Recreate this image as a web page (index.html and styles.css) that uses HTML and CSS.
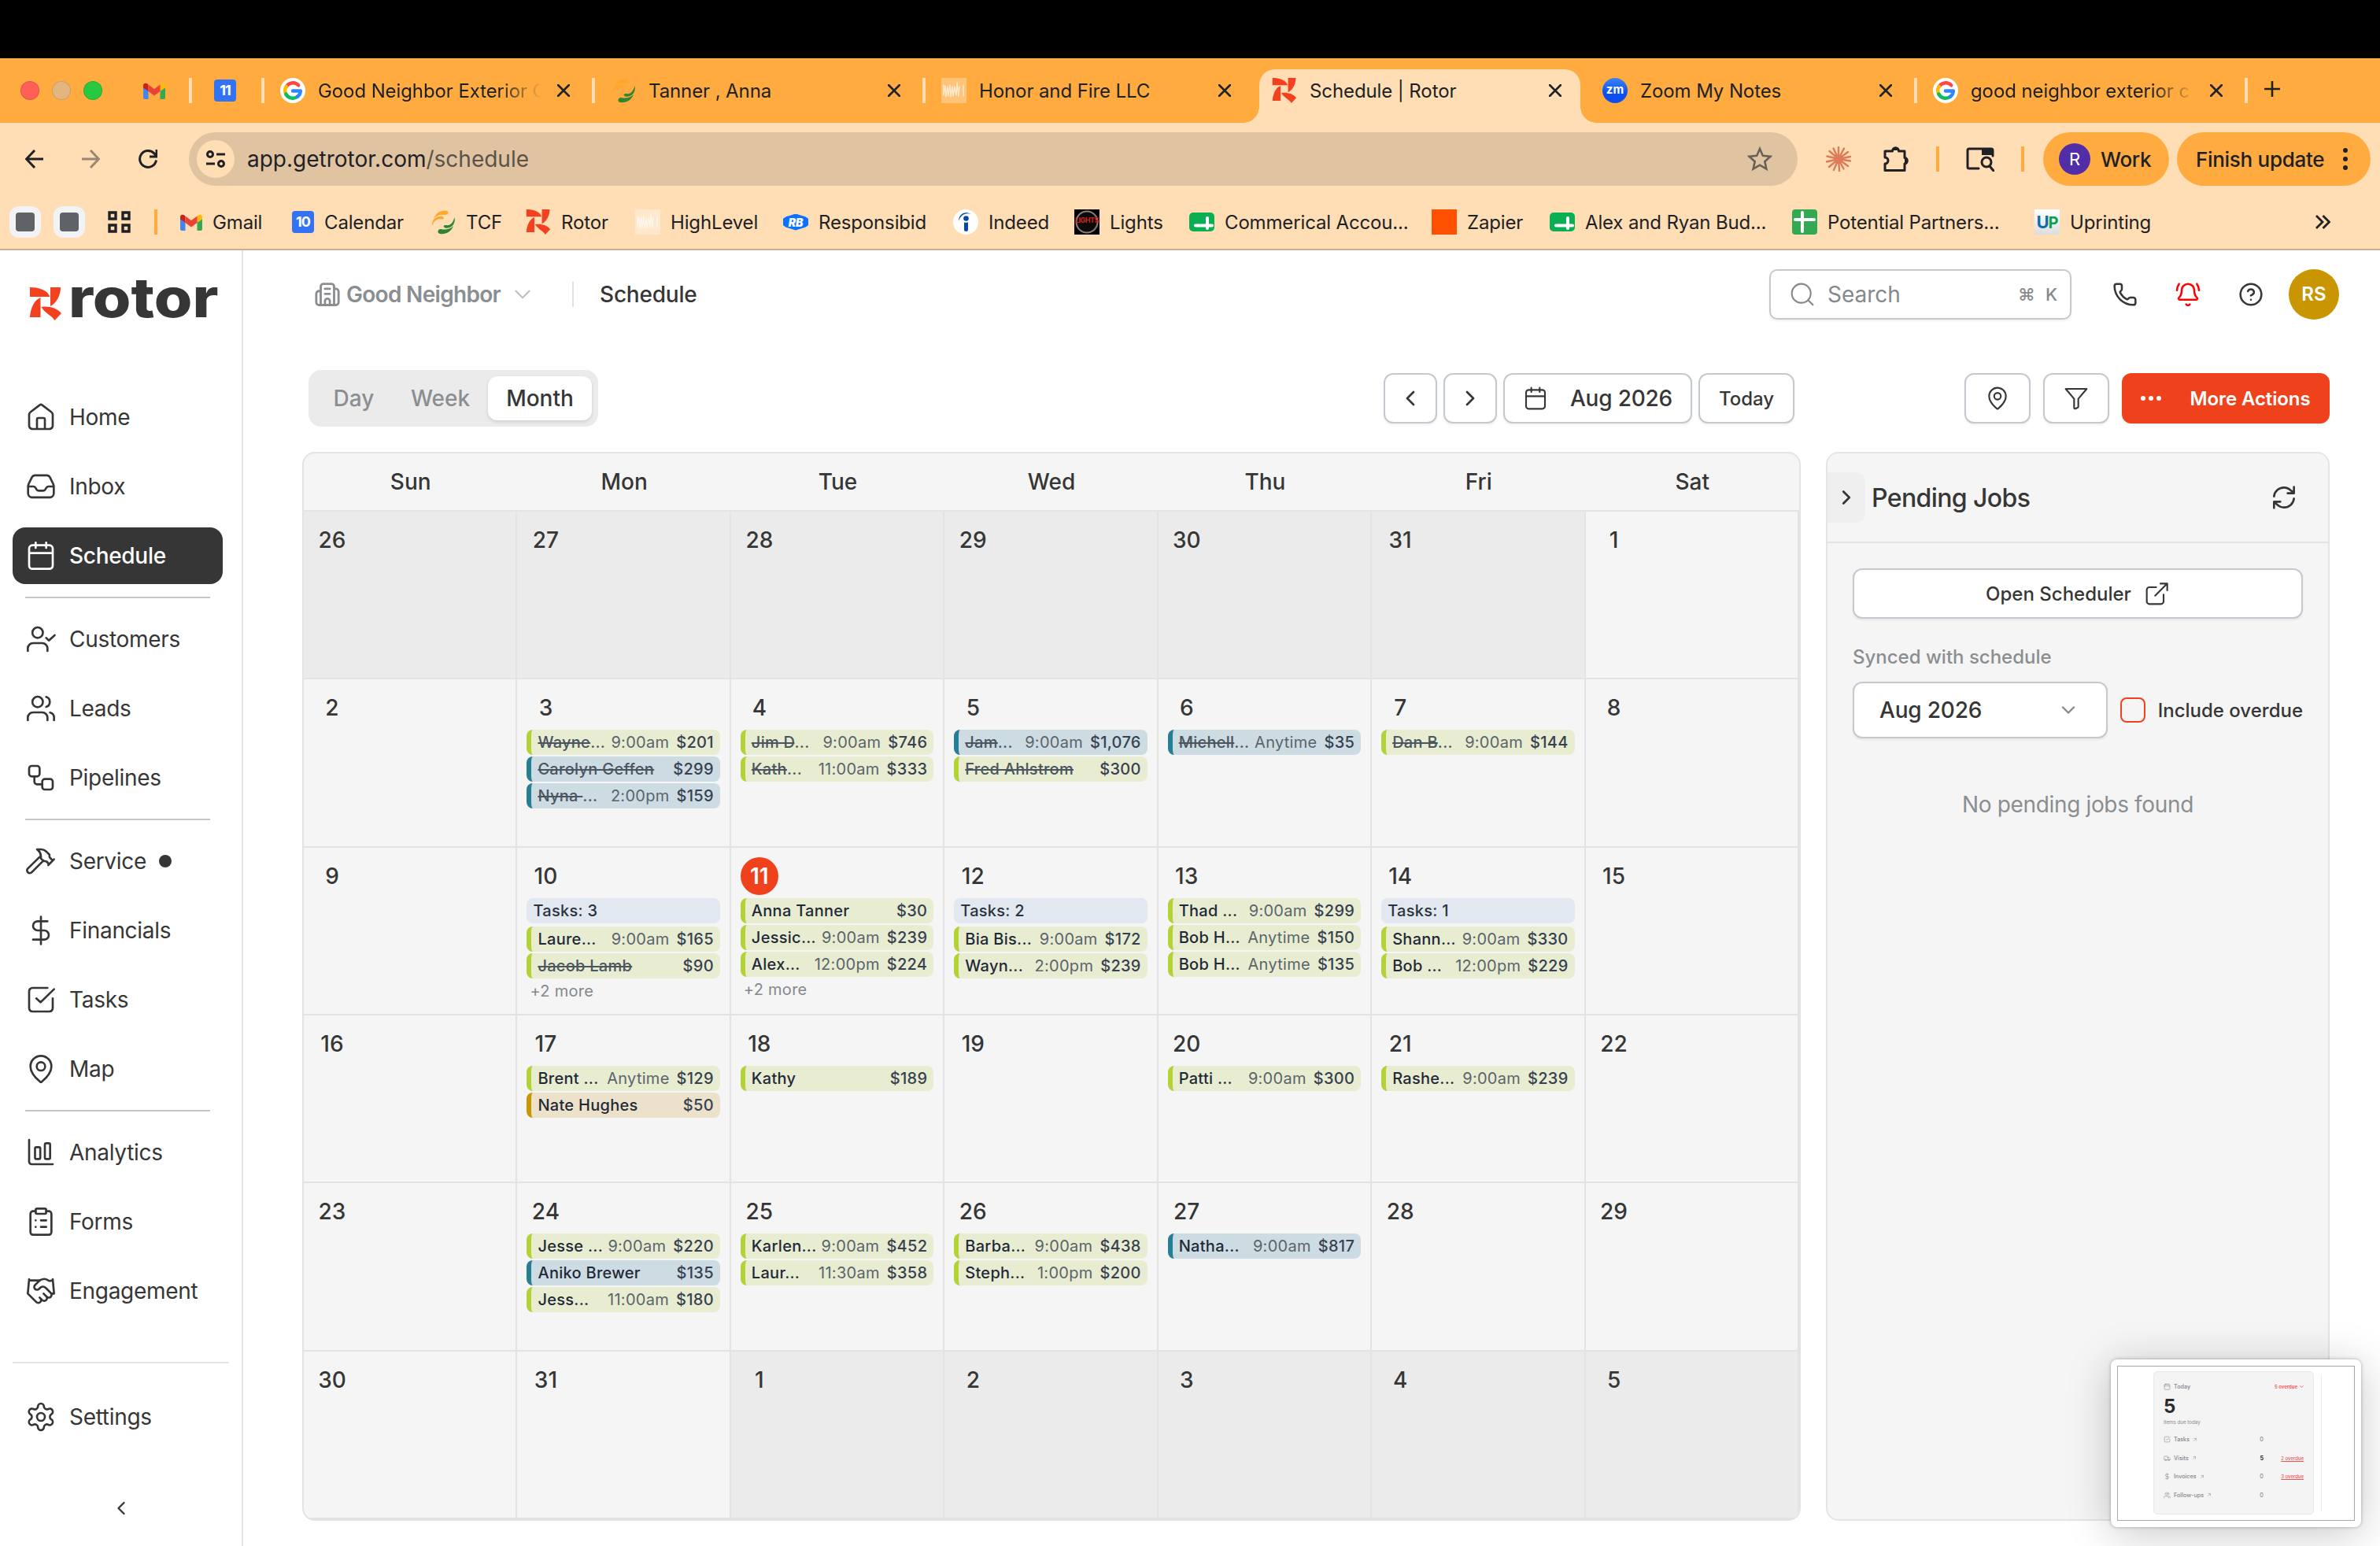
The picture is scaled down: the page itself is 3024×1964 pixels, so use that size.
FILE: index.html
```html
<!DOCTYPE html>
<html lang="en">
<head>
    <meta charset="UTF-8">
    <meta name="viewport" content="width=device-width, initial-scale=1.0">
    <title>Schedule | Rotor</title>
    <link rel="stylesheet" href="styles.css">
</head>
<body>
    <!-- Shared icons -->
    <svg class="sprite" xmlns="http://www.w3.org/2000/svg">
        <symbol id="i-rotor" viewBox="0 0 40 42"><path fill="#f3411f" d="M0 0C11 0 22 3 25.500 12H0zM26 0H39C39 10 34 20 26 24zM13.500 13V38H0C1 25 6 16 13.500 13zM14.500 25C24 23.500 34 26 40 33L31.500 42C27 35 19 33 14.500 25z"/></symbol>
        <symbol id="i-gmail" viewBox="0 0 28 21"><path fill="#4285f4" d="M0 5l6.500 4v12H2a2 2 0 0 1-2-2z"/><path fill="#34a853" d="M28 5l-6.500 4v12H26a2 2 0 0 0 2-2z"/><path fill="#fbbc04" d="M21.500 2.500C24 0 28 0 28 4v2.500L21.500 11z"/><path fill="#c5221f" d="M6.500 2.500C4 0 0 0 0 4v2.500L6.500 11z"/><path fill="#ea4335" d="M6.500 2.500L14 8l7.500-5.500V11L14 16.500 6.500 11z"/></symbol>
        <symbol id="i-google" viewBox="0 0 32 32"><circle cx="16" cy="16" r="16" fill="#fff"/><g fill="none" stroke-width="4.500"><path stroke="#ff4641" d="M7.500 11.500A9.800 9.800 0 0 1 23.200 9.300"/><path stroke="#fdbd00" d="M7.700 21.200A9.800 9.800 0 0 1 7.700 10.900"/><path stroke="#0ebc5f" d="M22.400 23.400A9.800 9.800 0 0 1 7.300 20.500"/><path stroke="#3186ff" d="M16 16.500H25.800A9.800 9.800 0 0 1 22 23.800"/></g></symbol>
        <symbol id="i-tcf" viewBox="0 0 32 32"><g fill="#ffa62b"><path d="M4 12C7 3 16 0 21 2c3 2 1 5-3 5C12 6 7 8 4 12z"/><path d="M2 21C1 13 8 8 15 9c3 1 2 4-1 3.500C8 11 4 15 2 21z"/></g><g fill="#2e8534"><path d="M30.500 10c2 10-6 15-12 13.500-3-1-2-4 1-3.500 6 1 9-3 11-10z"/><path d="M29 21c-3 8-10 11-17 10-4-1-3-6 1-6 6 1 11 1 16-4z"/></g></symbol>
        <symbol id="i-hl" viewBox="0 0 32 32"><path fill="#fff" opacity=".3" d="M0 0h32v32H0z"/><path stroke="#fff" stroke-width="1.400" opacity=".65" fill="none" d="M3 9v13l2-12 1 14 2-13 1 12 2-14 1 15 2-13 1 12 2-12 2 11 1-16 2 17 1-12M28 9v14"/></symbol>
        <symbol id="i-sheet" viewBox="0 0 32 32"><rect y="4" width="32" height="24" rx="5" fill="#0aaf54"/><path stroke="#fff" stroke-width="4" stroke-linecap="round" d="M8 20.500h21M23 11v13"/></symbol>
        <symbol id="i-x" viewBox="0 0 16 16"><path d="M1 1l14 14M15 1L1 15"/></symbol>
        <symbol id="i-home" viewBox="0 0 24 24"><path d="M9 21v-7.400c0-.6.400-1 1-1h4c.6 0 1 .4 1 1V21M11 2.800L4 8.100c-.7.500-1 1.200-1 2V18.500A2.500 2.500 0 0 0 5.500 21h13a2.500 2.500 0 0 0 2.500-2.500v-8.400c0-.8-.3-1.500-1-2l-7-5.300c-.6-.5-1.400-.5-2 0z"/></symbol>
        <symbol id="i-inbox" viewBox="0 0 24 24"><path d="M2.200 12h3.900c.8 0 1.400.4 1.800 1l.7 1.200c.4.600 1 1 1.800 1h3.200c.8 0 1.400-.4 1.800-1l.7-1.200c.4-.6 1-1 1.800-1h3.900M7.500 3.500h9c1 0 1.800.5 2.300 1.400l2.500 5c.3.700.5 1.400.5 2.100v5.300a3 3 0 0 1-3 3H5.200a3 3 0 0 1-3-3V12c0-.7.200-1.400.5-2.100l2.500-5c.5-.9 1.300-1.400 2.300-1.400z"/></symbol>
        <symbol id="i-cal" viewBox="0 0 24 24"><path d="M3 10h18M8 2v4M16 2v4M5.500 4h13A2.500 2.500 0 0 1 21 6.500v13a2.500 2.500 0 0 1-2.500 2.500h-13A2.500 2.500 0 0 1 3 19.500v-13A2.500 2.500 0 0 1 5.500 4z"/></symbol>
        <symbol id="i-customers" viewBox="0 0 24 24"><circle cx="9.500" cy="7" r="4"/><path d="M2 21v-2a4 4 0 0 1 4-4h7a4 4 0 0 1 4 4v2M16 11l2 2 4.500-4"/></symbol>
        <symbol id="i-users" viewBox="0 0 24 24"><circle cx="9.500" cy="7" r="4"/><path d="M2 21v-2a4 4 0 0 1 4-4h7a4 4 0 0 1 4 4v2M22 21v-2a4 4 0 0 0-3-3.900M16 3.200a4 4 0 0 1 0 7.600"/></symbol>
        <symbol id="i-pipe" viewBox="0 0 24 24"><rect x="3" y="3" width="8" height="8" rx="2"/><path d="M7 11v4a2 2 0 0 0 2 2h4"/><rect x="13" y="13" width="8" height="8" rx="2"/></symbol>
        <symbol id="i-hammer" viewBox="0 0 24 24"><path d="M14 11.500l-9 9a2 2 0 0 1-3-2.900l9.200-9M17.600 15L22 10.600M21 11.500l-1.900-1.900a2 2 0 0 1-.6-1.400V7L16.200 4.800A5.600 5.600 0 0 0 12.400 3H9l.9.800A6.200 6.200 0 0 1 12 8.400v1.600l2 2h1.200a2 2 0 0 1 1.400.6l1.700 1.800"/></symbol>
        <symbol id="i-dollar" viewBox="0 0 24 24"><path d="M12 1.500v21M17 5H9.500a3.500 3.500 0 0 0 0 7h5a3.500 3.500 0 0 1 0 7H6"/></symbol>
        <symbol id="i-task" viewBox="0 0 24 24"><path d="M21 11v7.500a2.500 2.500 0 0 1-2.500 2.500h-13A2.500 2.500 0 0 1 3 18.500v-13A2.500 2.500 0 0 1 5.500 3H17M8.500 11l3.200 3L22 4"/></symbol>
        <symbol id="i-pin" viewBox="0 0 24 24"><path d="M20 10c0 5-5.500 10.200-7.400 11.800a1 1 0 0 1-1.200 0C9.500 20.200 4 15 4 10a8 8 0 0 1 16 0"/><circle cx="12" cy="10" r="3.200"/></symbol>
        <symbol id="i-chart" viewBox="0 0 24 24"><path d="M3 2.500V19a2 2 0 0 0 2 2h16"/><rect x="7.500" y="8" width="4" height="9" rx="1"/><rect x="15" y="5" width="4" height="12" rx="1"/></symbol>
        <symbol id="i-form" viewBox="0 0 24 24"><rect x="8" y="2" width="8" height="4" rx="1"/><path d="M16 4h2a2 2 0 0 1 2 2v14a2 2 0 0 1-2 2H6a2 2 0 0 1-2-2V6a2 2 0 0 1 2-2h2M12 11h4M12 16h4M8 11h.01M8 16h.01"/></symbol>
        <symbol id="i-shake" viewBox="0 0 24 24"><path d="M11 17l2 2a1 1 0 1 0 3-3M14 14l2.500 2.500a1 1 0 1 0 3-3l-3.900-3.900a3 3 0 0 0-4.200 0l-.9.900a1 1 0 1 1-3-3l2.800-2.800a5.800 5.800 0 0 1 7.100-.9l.5.300a2 2 0 0 0 1.400.2L21 4M21 3l1 11h-2M3 3L2 14l6.500 6.500a1 1 0 1 0 3-3M3 4h8"/></symbol>
        <symbol id="i-gear" viewBox="0 0 24 24"><circle cx="12" cy="12" r="3"/><path d="M9.700 4.100a2.300 2.300 0 0 1 4.600 0 2.300 2.300 0 0 0 3.300 1.900 2.300 2.300 0 0 1 2.300 4 2.300 2.300 0 0 0 0 3.900 2.300 2.300 0 0 1-2.300 4 2.300 2.300 0 0 0-3.300 1.900 2.300 2.300 0 0 1-4.600 0 2.300 2.300 0 0 0-3.400-1.900 2.300 2.300 0 0 1-2.300-4 2.300 2.300 0 0 0 0-3.900 2.300 2.300 0 0 1 2.300-4 2.300 2.300 0 0 0 3.400-1.900"/></symbol>
        <symbol id="i-left" viewBox="0 0 24 24"><path d="M15 18l-6-6 6-6"/></symbol>
        <symbol id="i-right" viewBox="0 0 24 24"><path d="M9 18l6-6-6-6"/></symbol>
        <symbol id="i-down" viewBox="0 0 24 24"><path d="M6 9l6 6 6-6"/></symbol>
        <symbol id="i-building" viewBox="0 0 24 24"><path d="M6 21.500V5a2.500 2.500 0 0 1 2.500-2.500h7A2.500 2.500 0 0 1 18 5v16.500M6 9H4.500A2.500 2.500 0 0 0 2 11.500v7.500a2.500 2.500 0 0 0 2.500 2.500h15A2.500 2.500 0 0 0 22 19V9.500A2.500 2.500 0 0 0 19.500 7H18M9.800 7h4.400M9.800 11.500h4.400M9.800 21.500V18a2.200 2.200 0 0 1 4.400 0v3.500"/></symbol>
        <symbol id="i-search" viewBox="0 0 24 24"><circle cx="11" cy="11" r="9"/><path d="M22 22l-4.300-4.300"/></symbol>
        <symbol id="i-phone" viewBox="0 0 24 24"><path d="M13.800 16.600a1 1 0 0 0 1.200-.3l.4-.5a2 2 0 0 1 1.600-.8h3a2 2 0 0 1 2 2v3a2 2 0 0 1-2 2A18 18 0 0 1 2 4a2 2 0 0 1 2-2h3a2 2 0 0 1 2 2v3a2 2 0 0 1-.8 1.600l-.5.400a1 1 0 0 0-.3 1.200 14 14 0 0 0 6.400 6.400"/></symbol>
        <symbol id="i-bell" viewBox="0 0 24 24"><path d="M10.300 21.500a2 2 0 0 0 3.400 0M22.500 8c0-2.300-.8-4.300-2-6M1.500 8c0-2.300.8-4.300 2-6M3.300 15.300A1 1 0 0 0 4 17h16a1 1 0 0 0 .7-1.700C19.400 14 18 12.500 18 8A6 6 0 0 0 6 8c0 4.500-1.400 6-2.700 7.300"/></symbol>
        <symbol id="i-help" viewBox="0 0 24 24"><circle cx="12" cy="12" r="10"/><path d="M9.100 9a3 3 0 0 1 5.800 1c0 2-3 3-3 3M12 17h.01"/></symbol>
        <symbol id="i-filter" viewBox="0 0 24 24"><path d="M2 3h20l-8 9.500V20a1 1 0 0 1-.5.800l-2 1a1 1 0 0 1-1.500-.8v-8.500z"/></symbol>
        <symbol id="i-refresh" viewBox="0 0 24 24"><path d="M2.500 11A9.500 9.500 0 0 1 12 2.500c3 0 5 1.200 6.800 3L21.500 8M21.500 2v6h-6M21.500 13A9.500 9.500 0 0 1 12 21.500c-3 0-5-1.200-6.800-3L2.500 16M2.500 22v-6h6"/></symbol>
        <symbol id="i-open" viewBox="0 0 24 24"><path d="M15 2.500h6.500V9M10 14L21.500 2.500M18 13v6.500a2.500 2.500 0 0 1-2.500 2.500h-11A2.500 2.500 0 0 1 2 19.500v-11A2.500 2.500 0 0 1 4.500 6H11"/></symbol>
        <symbol id="i-truck" viewBox="0 0 24 24"><path d="M5 18H3.500A1.500 1.500 0 0 1 2 16.500v-10A1.500 1.500 0 0 1 3.500 5h9A1.500 1.500 0 0 1 14 6.500V18H9M14 9h4.500l3.500 4v5h-3"/><circle cx="7" cy="18" r="2"/><circle cx="17" cy="18" r="2"/></symbol>
        <symbol id="i-ne" viewBox="0 0 24 24"><path d="M6 18L18 6M8 6h10v10"/></symbol>
    </svg>

    <div class="menubar"></div>

    <!-- Browser tabs -->
    <div class="tabstrip">
        <div class="lights"><i class="red"></i><i class="tan"></i><i class="green"></i></div>
        <div class="pinned"><svg class="gmail"><use href="#i-gmail"/></svg></div>
        <div class="pinned sep"><span class="gcal">11</span></div>
        <div class="tab sep"><svg class="fav"><use href="#i-google"/></svg><span class="tab-title fade">Good Neighbor Exterior C</span><svg class="close"><use href="#i-x"/></svg></div>
        <div class="tab sep"><svg class="fav"><use href="#i-tcf"/></svg><span class="tab-title">Tanner , Anna</span><svg class="close"><use href="#i-x"/></svg></div>
        <div class="tab sep"><svg class="fav"><use href="#i-hl"/></svg><span class="tab-title">Honor and Fire LLC</span><svg class="close"><use href="#i-x"/></svg></div>
        <div class="tab active"><svg class="fav"><use href="#i-rotor"/></svg><span class="tab-title">Schedule | Rotor</span><svg class="close"><use href="#i-x"/></svg></div>
        <div class="tab"><span class="fav zoom-logo">zm</span><span class="tab-title">Zoom My Notes</span><svg class="close"><use href="#i-x"/></svg></div>
        <div class="tab sep"><svg class="fav"><use href="#i-google"/></svg><span class="tab-title fade">good neighbor exterior c</span><svg class="close"><use href="#i-x"/></svg></div>
        <div class="new-tab sep"><svg viewBox="0 0 20 20"><path d="M10 0v20M0 10h20"/></svg></div>
    </div>

    <!-- Address bar and bookmarks -->
    <div class="chrome">
        <div class="toolbar">
            <svg class="nav-btn" viewBox="0 0 24 24"><path d="M23 12H2M12 1L1.500 12 12 23"/></svg>
            <svg class="nav-btn dim" viewBox="0 0 24 24"><path d="M1 12h21M12 1l10.500 11L12 23"/></svg>
            <svg class="nav-btn" viewBox="0 0 24 24"><path d="M22.500 13.500A10.500 10.500 0 1 1 20 5l3 3.500M23 0v9h-9"/></svg>
            <div class="address">
                <span class="site-info"><svg viewBox="0 0 26 26"><circle cx="6" cy="7" r="3.500"/><path d="M14 7h11M1 19h11"/><circle cx="20" cy="19" r="3.500"/></svg></span>
                <span class="url">app.getrotor.com<span>/schedule</span></span>
                <svg class="star" viewBox="0 0 32 32"><path d="M16 3l3.900 8.900 9.600.9-7.200 6.400 2.100 9.500L16 23.700l-8.400 5 2.100-9.500-7.200-6.400 9.600-.9z"/></svg>
            </div>
            <svg class="claude" viewBox="0 0 32 32"><path d="M16 16V1M16 16L23 2.500M16 16L28 7M16 16L31 13M16 16L31 18.500M16 16L28 25M16 16L22.500 28.500M16 16L17 31M16 16L10 30M16 16L4 26M16 16L1 19.500M16 16L1.500 12.500M16 16L4.500 6M16 16L9.500 2.500"/></svg>
            <svg class="puzzle" viewBox="0 0 34 34"><path d="M3 7h9.500a4 4 0 0 1 8 0H28v8.500a3.800 3.800 0 0 1 0 7.500v8.500H3V23a4 4 0 0 0 0-8z"/><path class="solid" d="M12 6a4.500 4.500 0 0 1 9 0zM28 14.500a4.500 4.500 0 0 1 0 9z"/></svg>
            <i class="bar"></i>
            <svg class="tab-search" viewBox="0 0 36 32"><path d="M16 28H4a2 2 0 0 1-2-2V5a2 2 0 0 1 2-2h28a2 2 0 0 1 2 2v7"/><circle cx="26" cy="20" r="6"/><path d="M30 25l5 6"/><path class="solid" d="M20 3h14v8H20z"/></svg>
            <i class="bar"></i>
            <div class="pill profile"><span>R</span>Work</div>
            <div class="pill update">Finish update<i></i></div>
        </div>
        <div class="bookmarks">
            <span class="bm-group"></span>
            <span class="bm-group"></span>
            <svg class="apps" viewBox="0 0 30 28"><path d="M2 2h8v8H2zM19 2h8v8h-8zM2 18h8v8H2zM19 18h8v8h-8z"/></svg>
            <i class="bar"></i>
            <div class="bm"><svg class="gmail"><use href="#i-gmail"/></svg>Gmail</div>
            <div class="bm"><span class="gcal">10</span>Calendar</div>
            <div class="bm"><svg class="fav"><use href="#i-tcf"/></svg>TCF</div>
            <div class="bm"><svg class="fav"><use href="#i-rotor"/></svg>Rotor</div>
            <div class="bm"><svg class="fav"><use href="#i-hl"/></svg>HighLevel</div>
            <div class="bm"><span class="rb">RB</span>Responsibid</div>
            <div class="bm"><svg class="fav" viewBox="0 0 32 32"><circle cx="16" cy="16" r="16" fill="#fff"/><g fill="#0b45a8"><circle cx="16.500" cy="11.500" r="3.300"/><path d="M14 16.500c2 .6 3.500.4 5-.2V26c0 2.500-5 2.500-5 0zM7 15C7 6 15 1.500 22.500 6 15 3.500 9 8 7 15z"/></g></svg>Indeed</div>
            <div class="bm"><span class="fav lights-logo">LIGHTS</span>Lights</div>
            <div class="bm"><svg class="fav"><use href="#i-sheet"/></svg>Commerical Accou...</div>
            <div class="bm"><span class="fav zapier"></span>Zapier</div>
            <div class="bm"><svg class="fav"><use href="#i-sheet"/></svg>Alex and Ryan Bud...</div>
            <div class="bm"><svg class="fav" viewBox="0 0 32 32"><rect width="32" height="32" rx="4" fill="#34a853"/><path stroke="#fff" stroke-width="4" d="M4 13h24M13 4v24"/></svg>Potential Partners...</div>
            <div class="bm"><span class="fav up"><b>U</b><b>P</b></span>Uprinting</div>
            <svg class="more" viewBox="0 0 20 18"><path d="M2 1l8 8-8 8M10.500 1l8 8-8 8"/></svg>
        </div>
    </div>

    <div class="app">
        <aside class="sidebar">
            <div class="logo"><svg><use href="#i-rotor"/></svg><span>rotor</span></div>
            <nav>
                <a class="nav-item"><svg><use href="#i-home"/></svg>Home</a>
                <a class="nav-item"><svg><use href="#i-inbox"/></svg>Inbox</a>
                <a class="nav-item active"><svg><use href="#i-cal"/></svg>Schedule</a>
                <hr>
                <a class="nav-item"><svg><use href="#i-customers"/></svg>Customers</a>
                <a class="nav-item"><svg><use href="#i-users"/></svg>Leads</a>
                <a class="nav-item"><svg><use href="#i-pipe"/></svg>Pipelines</a>
                <hr>
                <a class="nav-item"><svg><use href="#i-hammer"/></svg>Service<i class="dot"></i></a>
                <a class="nav-item"><svg><use href="#i-dollar"/></svg>Financials</a>
                <a class="nav-item"><svg><use href="#i-task"/></svg>Tasks</a>
                <a class="nav-item"><svg><use href="#i-pin"/></svg>Map</a>
                <hr>
                <a class="nav-item"><svg><use href="#i-chart"/></svg>Analytics</a>
                <a class="nav-item"><svg><use href="#i-form"/></svg>Forms</a>
                <a class="nav-item"><svg><use href="#i-shake"/></svg>Engagement</a>
            </nav>
            <div class="sidebar-foot">
                <a class="nav-item"><svg><use href="#i-gear"/></svg>Settings</a>
                <svg class="collapse"><use href="#i-left"/></svg>
            </div>
        </aside>

        <main>
            <header class="topbar">
                <svg class="building"><use href="#i-building"/></svg>
                <span class="org">Good Neighbor</span>
                <svg class="org-arrow"><use href="#i-down"/></svg>
                <i class="divider"></i>
                <h1>Schedule</h1>
                <div class="search"><svg><use href="#i-search"/></svg><span>Search</span><kbd>⌘</kbd><kbd>K</kbd></div>
                <svg class="top-icon"><use href="#i-phone"/></svg>
                <svg class="top-icon alert"><use href="#i-bell"/></svg>
                <svg class="top-icon"><use href="#i-help"/></svg>
                <span class="avatar">RS</span>
            </header>

            <div class="controls">
                <div class="views"><span>Day</span><span>Week</span><span class="on">Month</span></div>
                <div class="date-nav">
                    <button class="btn arrow"><svg><use href="#i-left"/></svg></button>
                    <button class="btn arrow"><svg><use href="#i-right"/></svg></button>
                    <button class="btn date"><svg><use href="#i-cal"/></svg>Aug 2026</button>
                    <button class="btn today">Today</button>
                </div>
                <div class="actions">
                    <button class="btn square"><svg><use href="#i-pin"/></svg></button>
                    <button class="btn square"><svg><use href="#i-filter"/></svg></button>
                    <button class="btn primary"><span class="dots"><i></i><i></i><i></i></span>More Actions</button>
                </div>
            </div>

            <div class="content">
                <section class="calendar">
                    <div class="weekdays"><span>Sun</span><span>Mon</span><span>Tue</span><span>Wed</span><span>Thu</span><span>Fri</span><span>Sat</span></div>
                    <div class="days" id="days"></div>
                </section>

                <aside class="pending">
                    <div class="pending-head">
                        <span class="toggle"><svg><use href="#i-right"/></svg></span>
                        <h2>Pending Jobs</h2>
                        <svg class="refresh"><use href="#i-refresh"/></svg>
                    </div>
                    <div class="pending-body">
                        <button class="btn open">Open Scheduler<svg><use href="#i-open"/></svg></button>
                        <p class="synced">Synced with schedule</p>
                        <div class="filter-row">
                            <div class="select">Aug 2026<svg><use href="#i-down"/></svg></div>
                            <i class="checkbox"></i>
                            <span class="overdue-label">Include overdue</span>
                        </div>
                        <p class="empty">No pending jobs found</p>
                    </div>
                </aside>
            </div>
        </main>
    </div>

    <!-- Floating preview -->
    <div class="preview">
        <div class="preview-frame">
            <div class="preview-card">
                <div class="p-head"><svg><use href="#i-cal"/></svg>Today<b>5 overdue</b><svg class="p-down"><use href="#i-down"/></svg></div>
                <div class="p-count">5</div>
                <div class="p-sub">items due today</div>
                <div class="p-row"><svg><use href="#i-task"/></svg>Tasks<svg class="ne"><use href="#i-ne"/></svg><em>0</em><u></u></div>
                <div class="p-row"><svg><use href="#i-truck"/></svg>Visits<svg class="ne"><use href="#i-ne"/></svg><em class="strong">5</em><u>2 overdue</u></div>
                <div class="p-row"><svg><use href="#i-dollar"/></svg>Invoices<svg class="ne"><use href="#i-ne"/></svg><em>0</em><u>3 overdue</u></div>
                <div class="p-row"><svg><use href="#i-users"/></svg>Follow-ups<svg class="ne"><use href="#i-ne"/></svg><em>0</em><u></u></div>
            </div>
            <i class="p-line"></i>
        </div>
    </div>

    <script>
        // [color, name, ellipsis, time, price, done]
        const events = {
            3: [['green', 'Wayne', '...', '9:00am', '$201', 1], ['blue', 'Carolyn Geffen', '', '', '$299', 1], ['blue', 'Nyna ', '...', '2:00pm', '$159', 1]],
            4: [['green', 'Jim D', '...', '9:00am', '$746', 1], ['green', 'Kath', '...', '11:00am', '$333', 1]],
            5: [['blue', 'Jam', '...', '9:00am', '$1,076', 1], ['green', 'Fred Ahlstrom', '', '', '$300', 1]],
            6: [['blue', 'Michell', '...', 'Anytime', '$35', 1]],
            7: [['green', 'Dan B', '...', '9:00am', '$144', 1]],
            10: [['green', 'Laure', '...', '9:00am', '$165'], ['green', 'Jacob Lamb', '', '', '$90', 1]],
            11: [['green', 'Anna Tanner', '', '', '$30'], ['green', 'Jessic', '...', '9:00am', '$239'], ['green', 'Alex', '...', '12:00pm', '$224']],
            12: [['green', 'Bia Bis', '...', '9:00am', '$172'], ['green', 'Wayn', '...', '2:00pm', '$239']],
            13: [['green', 'Thad ', '...', '9:00am', '$299'], ['green', 'Bob H', '...', 'Anytime', '$150'], ['green', 'Bob H', '...', 'Anytime', '$135']],
            14: [['green', 'Shann', '...', '9:00am', '$330'], ['green', 'Bob ', '...', '12:00pm', '$229']],
            17: [['green', 'Brent ', '...', 'Anytime', '$129'], ['gold', 'Nate Hughes', '', '', '$50']],
            18: [['green', 'Kathy', '', '', '$189']],
            20: [['green', 'Patti ', '...', '9:00am', '$300']],
            21: [['green', 'Rashe', '...', '9:00am', '$239']],
            24: [['green', 'Jesse ', '...', '9:00am', '$220'], ['blue', 'Aniko Brewer', '', '', '$135'], ['green', 'Jess', '...', '11:00am', '$180']],
            25: [['green', 'Karlen', '...', '9:00am', '$452'], ['green', 'Laur', '...', '11:30am', '$358']],
            26: [['green', 'Barba', '...', '9:00am', '$438'], ['green', 'Steph', '...', '1:00pm', '$200']],
            27: [['blue', 'Natha', '...', '9:00am', '$817']]
        };
        const tasks = { 10: 3, 12: 2, 14: 1 };
        const more = { 10: 2, 11: 2 };
        const today = 11;

        const grid = document.getElementById('days');
        const first = new Date(2026, 6, 26);
        for (let i = 0; i < 42; i++) {
            const date = new Date(first.getFullYear(), first.getMonth(), first.getDate() + i);
            const d = date.getDate();
            const inMonth = date.getMonth() === 7;
            let html = `<span class="num${inMonth && d === today ? ' current' : ''}">${d}</span>`;
            if (inMonth) {
                if (tasks[d]) html += `<div class="event tasks">Tasks: ${tasks[d]}</div>`;
                (events[d] || []).forEach(([color, name, dots, time, price, done]) => {
                    html += `<div class="event ${color}"><span class="name${done ? ' done' : ''}"><span>${name}</span>${dots}</span><span class="time">${time}</span><span class="price">${price}</span></div>`;
                });
                if (more[d]) html += `<div class="more-link">+${more[d]} more</div>`;
            }
            const cell = document.createElement('div');
            cell.className = 'day' + (inMonth ? '' : ' other');
            cell.innerHTML = html;
            grid.appendChild(cell);
        }
    </script>
</body>
</html>
```
FILE: styles.css
```css
* {
    margin: 0;
    padding: 0;
    box-sizing: border-box;
}

body {
    width: 3024px;
    height: 1964px;
    overflow: hidden;
    display: flex;
    flex-direction: column;
    background: #fff;
    font-family: Inter, "Liberation Sans", sans-serif;
    color: #363636;
}

svg {
    fill: none;
    stroke: currentColor;
    stroke-width: 1.6;
    stroke-linecap: round;
    stroke-linejoin: round;
    flex: none;
}

.sprite {
    position: absolute;
    width: 0;
    height: 0;
}

.menubar {
    height: 74px;
    flex: none;
    background: #000;
}

/* Tabs */
.tabstrip {
    height: 82px;
    flex: none;
    display: flex;
    background: #ffab40;
    color: #202124;
    font-size: 24px;
}

.lights {
    width: 150px;
    padding-left: 26px;
    display: flex;
    align-items: center;
    gap: 16px;
}

.lights i {
    width: 24px;
    height: 24px;
    border-radius: 50%;
    border: 1px solid rgba(0, 0, 0, 0.12);
}

.red { background: #ff5f57; }
.tan { background: #e3b680; }
.green { background: #28c840; }

.pinned {
    width: 92px;
    display: flex;
    align-items: center;
    justify-content: center;
}

.fav {
    width: 32px;
    height: 32px;
    flex: none;
    stroke: none;
}

.gmail {
    width: 28px;
    height: 21px;
    stroke: none;
}

.gcal {
    width: 28px;
    height: 28px;
    border-radius: 4px;
    background: #3273f6;
    color: #fff;
    font-size: 18px;
    font-weight: 700;
    letter-spacing: -1px;
    line-height: 28px;
    text-align: center;
}

.sep {
    background: linear-gradient(#ffdeb5, #ffdeb5) no-repeat left 50% / 4px 32px;
}

.pinned.sep {
    margin-left: -2px;
    width: 92px;
}

.tab {
    width: 420px;
    padding: 0 24px 0 24px;
    display: flex;
    align-items: center;
}

.tab-title {
    width: 284px;
    margin-left: 16px;
    white-space: nowrap;
    overflow: hidden;
    letter-spacing: -0.1px;
}

.tab-title.fade {
    -webkit-mask-image: linear-gradient(90deg, #000 230px, transparent 284px);
    mask-image: linear-gradient(90deg, #000 230px, transparent 284px);
}

.close {
    width: 16px;
    height: 16px;
    margin-left: 20px;
    stroke-width: 2.6;
}

.tab.active {
    position: relative;
    width: 408px;
    height: 68px;
    margin: 14px 4px 0 8px;
    padding: 0 0 14px 16px;
    background: #ffdeb5;
    border-radius: 20px 20px 0 0;
}

.tab.active::before,
.tab.active::after {
    content: "";
    position: absolute;
    bottom: 0;
    width: 20px;
    height: 20px;
}

.tab.active::before {
    left: -20px;
    background: radial-gradient(circle at 0 0, transparent 19.5px, #ffdeb5 20px);
}

.tab.active::after {
    right: -20px;
    background: radial-gradient(circle at 100% 0, transparent 19.5px, #ffdeb5 20px);
}

.zoom-logo {
    border-radius: 50%;
    background: linear-gradient(#3d84f5, #0b50ee 60%);
    color: #fff;
    font-size: 15px;
    font-weight: 700;
    line-height: 30px;
    text-align: center;
}

.new-tab {
    width: 60px;
    display: flex;
    align-items: center;
    padding: 0 0 4px 25px;
}

.new-tab svg {
    width: 20px;
    height: 20px;
    stroke-width: 2.6;
}

/* Toolbar */
.chrome {
    height: 162px;
    flex: none;
    background: #ffdeb5;
    border-bottom: 2px solid #c9ae92;
    color: #202124;
}

.toolbar {
    height: 92px;
    padding: 0 12px 0 32px;
    display: flex;
    align-items: center;
}

.nav-btn {
    width: 24px;
    height: 24px;
    margin-right: 47px;
    stroke-width: 3;
    stroke-linecap: butt;
    stroke-linejoin: miter;
}

.nav-btn + .nav-btn + .nav-btn {
    margin-right: 40px;
    margin-left: 2px;
}

.nav-btn.dim {
    opacity: 0.45;
}

.address {
    width: 2044px;
    height: 68px;
    margin-right: 36px;
    padding: 0 32px 0 10px;
    display: flex;
    align-items: center;
    border-radius: 34px;
    background: #e0c4a1;
}

.site-info {
    width: 48px;
    height: 48px;
    display: flex;
    align-items: center;
    justify-content: center;
    border-radius: 50%;
    background: #ffdeb5;
}

.site-info svg {
    width: 26px;
    height: 26px;
    stroke-width: 3;
    stroke-linecap: butt;
}

.url {
    flex: 1;
    margin-left: 16px;
    font-size: 28px;
}

.url span {
    color: #5b5248;
}

.star {
    width: 32px;
    height: 32px;
    color: #666058;
    stroke-width: 2.6;
    stroke-linejoin: miter;
}

.claude {
    width: 32px;
    height: 32px;
    margin-right: 40px;
    color: #dd7a57;
    stroke-width: 2.4;
}

.puzzle {
    width: 34px;
    height: 34px;
    margin-right: 34px;
    stroke-width: 3;
}

.solid {
    fill: currentColor;
    stroke: none;
}

.bar {
    width: 4px;
    height: 32px;
    background: #ffab40;
}

.tab-search {
    width: 36px;
    height: 32px;
    margin: 0 34px;
    stroke-width: 3;
}

.pill {
    height: 68px;
    display: flex;
    align-items: center;
    border-radius: 34px;
    background: #ffab40;
    font-size: 26px;
    font-weight: 500;
    letter-spacing: -0.3px;
}

.profile {
    width: 160px;
    margin-left: 24px;
    padding-left: 20px;
    gap: 13px;
}

.profile span {
    width: 40px;
    height: 40px;
    border-radius: 50%;
    background: #512da8;
    color: #fff;
    font-size: 22px;
    font-weight: 400;
    line-height: 40px;
    text-align: center;
}

.update {
    flex: 1;
    margin-left: 10px;
    padding: 0 29px 0 24px;
    justify-content: space-between;
    white-space: nowrap;
}

.update i {
    width: 6px;
    height: 6px;
    border-radius: 50%;
    background: #202124;
    box-shadow: 0 -11px #202124, 0 11px #202124;
}

/* Bookmarks */
.bookmarks {
    height: 68px;
    padding-left: 12px;
    display: flex;
    align-items: center;
    font-size: 24px;
    letter-spacing: -0.15px;
}

.bm-group {
    width: 40px;
    height: 40px;
    margin-right: 16px;
    border: 8px solid #f1f3f4;
    border-radius: 12px;
    background: #5f6368;
}

.apps {
    width: 30px;
    height: 28px;
    margin: 0 29px 0 13px;
    stroke-width: 3.4;
    stroke-linejoin: miter;
}

.bookmarks .bar {
    margin-right: 29px;
}

.bm {
    width: 142px;
    display: flex;
    align-items: center;
    gap: 13px;
    white-space: nowrap;
}

.bm:nth-of-type(2) { width: 176px; }
.bm:nth-of-type(3) { width: 121px; }
.bm:nth-of-type(4) { width: 139px; }
.bm:nth-of-type(5) { width: 188px; }
.bm:nth-of-type(6) { width: 216px; }
.bm:nth-of-type(7) { width: 154px; }
.bm:nth-of-type(8) { width: 146px; }
.bm:nth-of-type(9) { width: 308px; }
.bm:nth-of-type(10) { width: 150px; }
.bm:nth-of-type(11) { width: 308px; }
.bm:nth-of-type(12) { width: 308px; }
.bm:nth-of-type(13) { width: 356px; }

.rb {
    width: 32px;
    height: 21px;
    background: #0b72fe;
    clip-path: polygon(50% 0, 88% 18%, 100% 30%, 100% 70%, 88% 82%, 50% 100%, 12% 82%, 0 70%, 0 30%, 12% 18%);
    color: #fff;
    font-size: 14px;
    font-style: italic;
    font-weight: 900;
    line-height: 21px;
    text-align: center;
}

.lights-logo {
    background: radial-gradient(circle, #0b0b0b 12px, #8d7d77 13px, #8d7d77 14px, #000 15px);
    color: #d8201a;
    font-size: 9px;
    font-weight: 700;
    letter-spacing: -0.5px;
    line-height: 28px;
    text-align: center;
}

.zapier {
    background: #ff4f00;
}

.up {
    background: linear-gradient(#fff, #ddd);
    font-size: 22px;
    line-height: 32px;
    text-align: center;
    letter-spacing: -1px;
}

.up b:first-child { color: #0b6ea8; }
.up b:last-child { color: #0ea04b; font-size: 20px; }

.more {
    width: 20px;
    height: 18px;
    stroke-width: 2.8;
    stroke-linecap: butt;
    stroke-linejoin: miter;
}

/* App */
.app {
    flex: 1;
    min-height: 0;
    display: flex;
}

.sidebar {
    width: 309px;
    display: flex;
    flex-direction: column;
    border-right: 2px solid #e5e5e5;
}

.logo {
    height: 176px;
    padding: 29px 0 0 38px;
    display: flex;
}

.logo svg {
    width: 40px;
    height: 42px;
    margin-top: 18px;
    stroke: none;
}

.logo span {
    height: 60px;
    margin-top: 1px;
    margin-left: 9px;
    font-size: 69px;
    font-weight: 800;
    line-height: 60px;
    transform: scaleX(1.14);
    transform-origin: left;
}

.nav-item {
    height: 72px;
    margin: 0 24px 16px 16px;
    padding-left: 16px;
    display: flex;
    align-items: center;
    gap: 16px;
    border-radius: 16px;
    font-size: 28px;
    letter-spacing: -0.3px;
}

.nav-item svg {
    width: 40px;
    height: 40px;
}

.nav-item.active {
    background: #363636;
    color: #fff;
    font-weight: 500;
}

.sidebar hr {
    height: 2px;
    margin: 0 40px 16px 32px;
    border: 0;
    background: #c5c5c5;
}

.dot {
    width: 16px;
    height: 16px;
    border-radius: 50%;
    background: #363636;
}

.sidebar-foot {
    margin: 38px 16px 0;
    border-top: 2px solid #e5e5e5;
}

.sidebar-foot .nav-item {
    margin: 32px 0 0;
}

.collapse {
    display: block;
    width: 28px;
    height: 28px;
    margin: 66px auto 0;
    stroke-width: 2;
}

main {
    flex: 1;
    padding: 0 0 0 75px;
}

.topbar {
    height: 112px;
    padding-left: 15px;
    display: flex;
    align-items: center;
}

.building {
    width: 34px;
    height: 34px;
    color: #8b8e91;
    stroke-width: 2;
}

.org {
    width: 200px;
    margin-left: 7px;
    color: #8b8e91;
    font-size: 28px;
    font-weight: 600;
    letter-spacing: -0.7px;
    white-space: nowrap;
}

.org-arrow {
    width: 34px;
    height: 34px;
    margin: 0 46px 0 7px;
    color: #bdbfc1;
}

.divider {
    width: 2px;
    height: 32px;
    background: #e2e2e2;
}

.topbar h1 {
    flex: 1;
    margin-left: 33px;
    font-size: 28px;
    font-weight: 500;
    letter-spacing: -0.2px;
}

.search {
    width: 384px;
    height: 64px;
    margin-right: 52px;
    padding: 0 16px 0 24px;
    display: flex;
    align-items: center;
    border: 2px solid #c4c8cf;
    border-radius: 10px;
    color: #85888c;
    font-size: 28px;
    box-shadow: 0 2px 3px rgba(0, 0, 0, 0.06);
}

.search svg {
    width: 32px;
    height: 32px;
}

.search span {
    flex: 1;
    margin-left: 16px;
}

.search kbd {
    margin-left: 13px;
    font: 500 22px Inter, "DejaVu Sans", sans-serif;
}

.top-icon {
    width: 32px;
    height: 32px;
    margin-right: 48px;
    stroke-width: 1.9;
}

.top-icon.alert {
    color: #f00;
}

.avatar {
    width: 64px;
    height: 64px;
    margin: 0 52px 0 -16px;
    border-radius: 50%;
    background: #c99500;
    color: #fff;
    font-size: 24px;
    font-weight: 600;
    line-height: 64px;
    text-align: center;
}

.controls {
    height: 144px;
    padding: 40px 64px 0 8px;
    display: flex;
    align-items: flex-start;
}

.views {
    width: 368px;
    height: 72px;
    padding: 8px;
    display: flex;
    border-radius: 16px;
    background: #ebebeb;
    color: #8b8e91;
    font-size: 28px;
    font-weight: 500;
    line-height: 57px;
    text-align: center;
}

.views span:nth-child(1) { width: 99px; }
.views span:nth-child(2) { width: 121px; }

.views .on {
    flex: 1;
    border-radius: 12px;
    background: #fff;
    color: #363636;
    box-shadow: 0 2px 4px rgba(0, 0, 0, 0.12);
}

.date-nav {
    flex: 1;
    margin-left: 998px;
    padding-top: 4px;
    display: flex;
    gap: 8px;
}

.btn {
    height: 64px;
    display: flex;
    align-items: center;
    justify-content: center;
    border: 2px solid #c4c8cf;
    border-radius: 12px;
    background: #fff;
    color: #363636;
    font: 500 24px Inter, sans-serif;
    box-shadow: 0 2px 3px rgba(0, 0, 0, 0.06);
}

.btn svg {
    width: 32px;
    height: 32px;
}

.arrow { width: 68px; }

.arrow svg {
    stroke-width: 2;
}

.date {
    width: 240px;
    gap: 28px;
    font-size: 28px;
    letter-spacing: -0.2px;
}

.today { width: 122px; }

.actions {
    padding-top: 4px;
    display: flex;
    gap: 16px;
}

.square { width: 84px; }

.primary {
    width: 264px;
    gap: 36px;
    border: 0;
    background: #ef421c;
    color: #fff;
    font-weight: 600;
    letter-spacing: -0.1px;
    white-space: nowrap;
}

.dots {
    display: flex;
    gap: 4px;
}

.dots i {
    width: 6px;
    height: 6px;
    border-radius: 50%;
    background: #fff;
}

.content {
    display: flex;
    gap: 32px;
}

.calendar {
    width: 1904px;
    height: 1358px;
    display: flex;
    flex-direction: column;
    border: 2px solid #e3e3e3;
    border-radius: 16px;
    background: #f5f5f5;
    overflow: hidden;
}

.weekdays {
    height: 74px;
    flex: none;
    display: grid;
    grid-template-columns: repeat(7, 1fr);
    border-bottom: 2px solid #e3e3e3;
    font-size: 28px;
    font-weight: 500;
    line-height: 73px;
    text-align: center;
}

.days {
    flex: 1;
    display: grid;
    grid-template-columns: repeat(7, minmax(0, 1fr));
    grid-template-rows: repeat(6, minmax(0, 1fr));
}

.day {
    padding: 12px;
    border-right: 2px solid #e3e3e3;
    border-bottom: 2px solid #e3e3e3;
}

.day.other {
    background: #ebebeb;
}

.num {
    display: block;
    width: 48px;
    height: 48px;
    margin-bottom: 4px;
    border-radius: 50%;
    font-size: 28px;
    font-weight: 500;
    line-height: 49px;
    text-align: center;
}

.num.current {
    background: #ef421c;
    color: #fff;
    font-weight: 600;
}

.event {
    height: 32px;
    margin-bottom: 2px;
    padding: 0 8px;
    display: flex;
    align-items: center;
    border-left: 6px solid;
    border-radius: 8px;
    font-size: 20px;
    font-weight: 500;
    letter-spacing: 0.28px;
    white-space: nowrap;
}

.event.tasks {
    margin-bottom: 4px;
    border: 0;
    background: #e1e8f0;
    color: #2b3340;
}

.event.green { background: #e8edd2; border-color: #b2d235; }
.event.blue { background: #cddce2; border-color: #267e92; }
.event.gold { background: #ece1cb; border-color: #c99500; }

.name {
    flex: 1;
    color: #1f2937;
}

.name.done {
    color: #4b555f;
}

.name.done span {
    text-decoration: line-through;
    text-decoration-thickness: 2px;
    white-space: pre;
}

.time {
    margin-right: 9px;
    color: #5b646b;
    font-weight: 400;
}

.price {
    color: #374151;
}

.more-link {
    padding-left: 4px;
    color: #85888c;
    font-size: 20px;
    letter-spacing: 0.28px;
    line-height: 29px;
}

/* Pending jobs */
.pending {
    width: 640px;
    height: 1358px;
    border: 2px solid #e5e5e5;
    border-radius: 16px;
    background: #f5f5f5;
}

.pending-head {
    height: 114px;
    padding-right: 40px;
    display: flex;
    align-items: center;
    border-bottom: 2px solid #e3e3e3;
}

.toggle {
    width: 48px;
    height: 64px;
    display: flex;
    align-items: center;
    justify-content: center;
    border-radius: 0 12px 12px 0;
    background: #efefef;
}

.toggle svg {
    width: 30px;
    height: 30px;
    stroke-width: 2.2;
}

.pending h2 {
    flex: 1;
    margin-left: 8px;
    font-size: 32px;
    font-weight: 500;
    letter-spacing: -0.6px;
}

.refresh {
    width: 32px;
    height: 32px;
    stroke-width: 2;
}

.pending-body {
    padding: 32px;
}

.open {
    width: 100%;
    gap: 17px;
}

.synced {
    margin: 33px 0 15px;
    color: #8b8e91;
    font-size: 24px;
    font-weight: 500;
    line-height: 32px;
}

.filter-row {
    display: flex;
    align-items: center;
    justify-content: space-between;
    font-size: 24px;
    font-weight: 500;
    white-space: nowrap;
}

.select {
    width: 324px;
    height: 72px;
    padding: 0 34px 0 32px;
    display: flex;
    align-items: center;
    justify-content: space-between;
    border: 2px solid #c4c8cf;
    border-radius: 12px;
    background: #fff;
    font-size: 28px;
    letter-spacing: -0.2px;
    box-shadow: 0 2px 3px rgba(0, 0, 0, 0.06);
}

.select svg {
    width: 28px;
    height: 28px;
    color: #85888c;
    stroke-width: 2;
}

.checkbox {
    width: 32px;
    height: 32px;
    border: 2px solid #ef421c;
    border-radius: 8px;
}

.empty {
    margin-top: 66px;
    color: #8b8e91;
    font-size: 28px;
    letter-spacing: -0.35px;
    line-height: 36px;
    text-align: center;
}

/* Preview window in the corner */
.preview {
    position: absolute;
    left: 2682px;
    top: 1727px;
    width: 318px;
    height: 213px;
    padding: 8px;
    border-radius: 8px;
    background: #fff;
    box-shadow: 0 0 4px rgba(0, 0, 0, 0.3), 0 8px 56px rgba(0, 0, 0, 0.22);
}

.preview-frame {
    height: 197px;
    display: flex;
    padding: 6px 0 0 45px;
    border: 1px solid #a9a9a9;
}

.preview-card {
    width: 204px;
    height: 182px;
    padding: 11px 12px;
    border: 1px solid #e9e9e9;
    border-radius: 5px;
    background: #f4f4f4;
    color: #85888c;
    font-size: 7.2px;
    font-weight: 500;
}

.p-line {
    width: 1px;
    height: 174px;
    margin: 4px 0 0 9px;
    background: #eee;
}

.preview-card svg {
    width: 9px;
    height: 9px;
    margin-right: 4px;
}

.p-head {
    height: 14px;
    display: flex;
    align-items: center;
}

.p-head b {
    margin-left: auto;
    color: #f15252;
    font-size: 6px;
    font-weight: 600;
}

.preview-card .p-down {
    width: 7px;
    height: 7px;
    margin: 0 -1px 0 2px;
    color: #f15252;
    stroke-width: 3;
}

.p-count {
    height: 35px;
    color: #2b2b2b;
    font-size: 24px;
    font-weight: 700;
    line-height: 38px;
}

.p-sub {
    height: 14px;
    font-size: 6.2px;
    font-weight: 400;
}

.p-row {
    height: 23.5px;
    display: flex;
    align-items: center;
}

.preview-card .ne {
    width: 6px;
    height: 6px;
    margin-left: 4px;
    stroke-width: 2;
}

.p-row em {
    margin-left: auto;
    font-style: normal;
}

.p-row .strong {
    color: #2b2b2b;
    font-weight: 700;
}

.p-row u {
    width: 51px;
    color: #f15252;
    font-size: 6px;
    text-align: right;
}
```
